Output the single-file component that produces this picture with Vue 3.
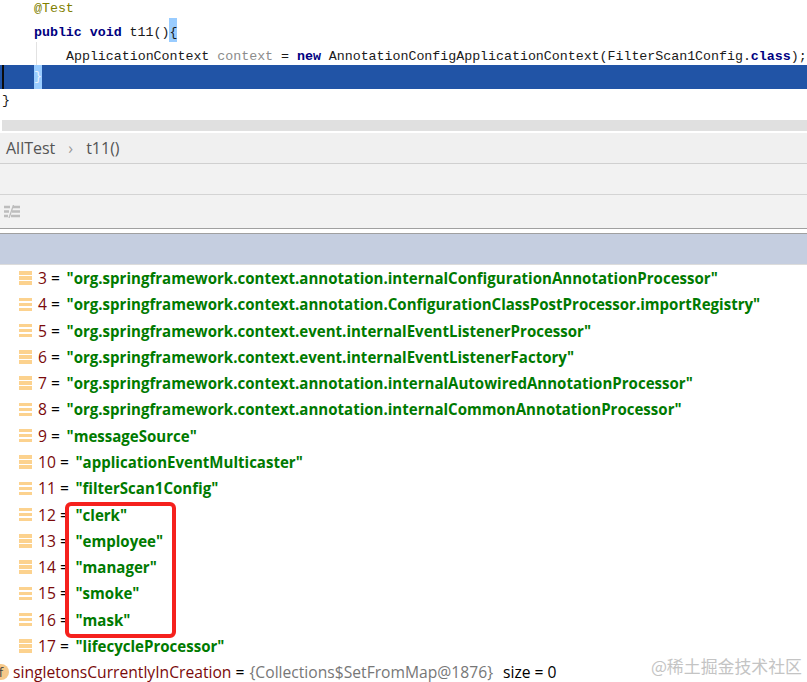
<script setup>
const rows = [
  { n: 3, s: 'org.springframework.context.annotation.internalConfigurationAnnotationProcessor' },
  { n: 4, s: 'org.springframework.context.annotation.ConfigurationClassPostProcessor.importRegistry' },
  { n: 5, s: 'org.springframework.context.event.internalEventListenerProcessor' },
  { n: 6, s: 'org.springframework.context.event.internalEventListenerFactory' },
  { n: 7, s: 'org.springframework.context.annotation.internalAutowiredAnnotationProcessor' },
  { n: 8, s: 'org.springframework.context.annotation.internalCommonAnnotationProcessor' },
  { n: 9, s: 'messageSource' },
  { n: 10, s: 'applicationEventMulticaster' },
  { n: 11, s: 'filterScan1Config' },
  { n: 12, s: 'clerk' },
  { n: 13, s: 'employee' },
  { n: 14, s: 'manager' },
  { n: 15, s: 'smoke' },
  { n: 16, s: 'mask' },
  { n: 17, s: 'lifecycleProcessor' }
]
</script>

<template>
  <div class="page">
    <section class="code">
      <div class="line ind1 first"><span class="anno">@Test</span></div>
      <div class="line ind1 low"><b class="kw">public void</b> t11()<span class="brace">{</span></div>
      <div class="line ind2 low third">ApplicationContext <span class="muted">context</span> = <b class="kw">new</b> AnnotationConfigApplicationContext(FilterScan1Config.<b class="kw">class</b>);</div>
      <div class="line ind1 selected"><i class="caret"></i><span class="brace">}</span></div>
      <div class="line close">}</div>
      <i class="guide"></i>
    </section>
    <div class="scrollbar"></div>
    <nav class="crumbs"><span>AllTest</span><span class="chev">›</span><span>t11()</span></nav>
    <div class="band"></div>
    <div class="band tools">
      <svg width="16" height="13" viewBox="0 0 16 13" fill="none" stroke="#bdbdbd" stroke-width="2.300">
        <path d="M0 2h6M0 6.500h5M0 11h4M9 2h7M8 6.500h8M7 11h9" />
        <path d="M9.500 0 5 13" stroke-width="1.300" />
      </svg>
    </div>
    <div class="gap"></div>
    <div class="thead"></div>
    <ul class="vars">
      <li v-for="r in rows" :key="r.n" class="row">
        <span class="stack"><i></i><i></i><i></i></span>
        <span class="num">{{ r.n }}</span><span class="eq"> = </span><b class="str">"{{ r.s }}"</b>
      </li>
      <li class="row field">
        <span class="f">f</span>
        <span class="num">singletonsCurrentlyInCreation</span><span class="eq"> = </span><span class="obj">{Collections$SetFromMap@1876}</span><span class="eq size">size = 0</span>
      </li>
    </ul>
    <div class="redbox"></div>
    <div class="mark">@稀土掘金技术社区</div>
  </div>
</template>

<style>
html, body { margin: 0; background: #fff; }
</style>

<style scoped>
.page { position: relative; width: 807px; height: 682px; overflow: hidden; background: #fff; font-family: "Open Sans", "Noto Sans", sans-serif; }
.code { position: relative; height: 120px; font: 13.33px/24px "Liberation Mono", monospace; letter-spacing: -0.035px; color: #1a1a1a; }
.line { height: 24px; white-space: pre; }
.first { height: 18px; line-height: 17px; }
.low { line-height: 30px; }
.third { height: 23px; }
.ind1 { padding-left: 34px; }
.ind2 { padding-left: 66px; }
.close { padding-left: 2px; }
.anno { color: #808000; }
.kw { color: #000080; }
.muted { color: #8c8c8c; }
.brace { display: inline-block; vertical-align: top; background: #99ccff; width: 8px; height: 24px; }
.selected { position: relative; background: #2154a6; color: #e8f0fa; }
.caret { position: absolute; left: 2px; top: 0; width: 2px; height: 24px; background: #0b0b0b; }
.guide { position: absolute; left: 36px; top: 42px; width: 1px; height: 23px; background: #e2e2e2; }
.scrollbar { height: 11px; margin-left: 2px; background: #e0e0e0; border-bottom: 2px solid #fff; }
.crumbs { display: flex; align-items: center; height: 30px; padding-left: 6px; background: #f0f0f0; color: #555; font-size: 16px; border-bottom: 1px solid #d0d0d0; }
.chev { margin: 0 13px 0 13px; color: #999; }
.band { height: 30px; background: #f2f2f2; border-bottom: 1px solid #d4d4d4; }
.tools { display: flex; align-items: center; height: 33px; padding-left: 4px; border-bottom-color: #a0a0a0; }
.gap { height: 4px; }
.thead { height: 30px; background: #c5cee0; border-top: 1px solid #a0a0a0; border-bottom: 1px solid #dcdcdc; }
.vars { list-style: none; margin: 0; padding: 0; }
.row { display: flex; align-items: center; height: 26.28px; padding-left: 19px; font-size: 15.05px; white-space: pre; color: #000; }
.stack { display: flex; flex-direction: column; gap: 1.500px; width: 13px; margin-right: 6px; }
.stack i { height: 3.500px; background: #fcd28e; }
.num, .eq { font-size: 15.650px; }
.num { color: #7a0a0a; }
.eq { margin-right: 2.500px; }
.str { color: #007a00; }
.field { padding-left: 0; }
.f { display: flex; align-items: center; justify-content: center; width: 16px; height: 16px; margin: 0 4px 0 -7px; border-radius: 50%; background: #f6c98a; font-size: 13px; color: #444; }
.field .eq { margin-right: 1px; }
.obj { color: #777; font-size: 15.650px; }
.size { margin-left: 10px; }
.redbox { position: absolute; left: 65px; top: 502px; width: 103px; height: 128px; border: 4px solid #f5211d; border-radius: 6px; }
.mark { position: absolute; right: 5px; top: 653px; font: 16.900px "Noto Sans CJK SC", sans-serif; color: #c4c4c4; }
</style>
